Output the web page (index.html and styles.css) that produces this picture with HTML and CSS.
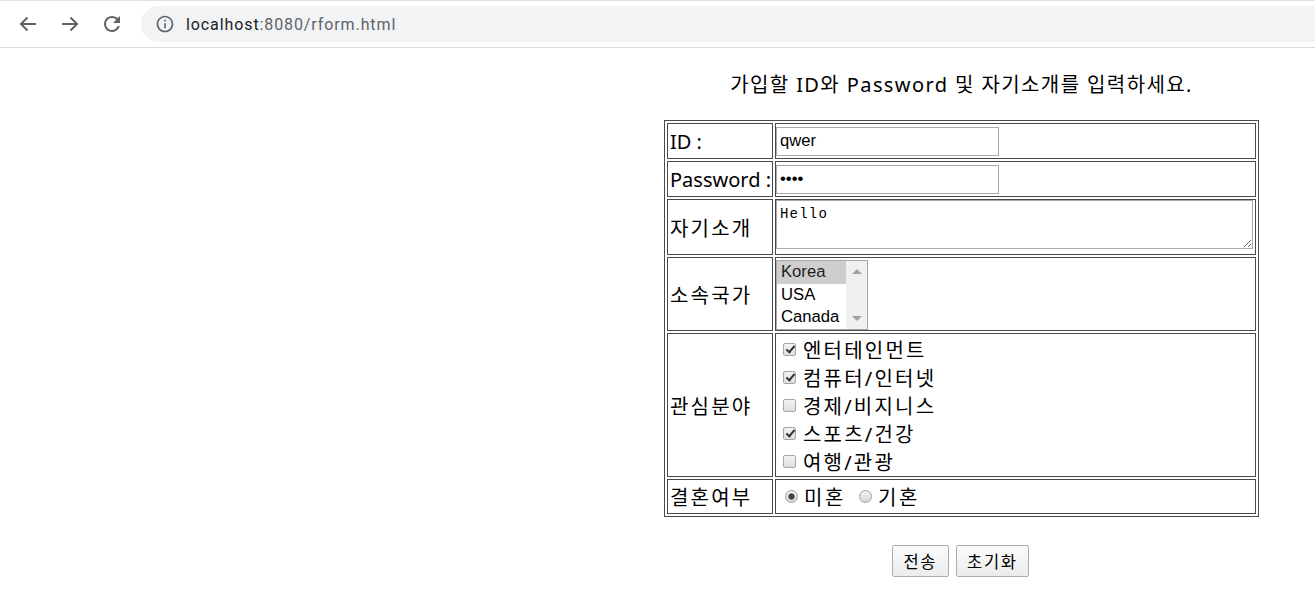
FILE: index.html
```html
<!DOCTYPE html>
<html lang="ko">
<head>
<meta charset="utf-8">
<title>rform</title>
<link rel="stylesheet" href="styles.css">
</head>
<body>
<header class="toolbar">
  <div class="nav-btn">
    <svg width="24" height="24" viewBox="0 0 24 24"><path d="M20 12H5M11.5 5.5L5 12l6.5 6.5" fill="none" stroke="#5f6368" stroke-width="2"/></svg>
  </div>
  <div class="nav-btn">
    <svg width="24" height="24" viewBox="0 0 24 24"><path d="M4 12h15M12.5 5.5L19 12l-6.5 6.5" fill="none" stroke="#5f6368" stroke-width="2"/></svg>
  </div>
  <div class="nav-btn">
    <svg width="24" height="24" viewBox="0 0 24 24"><path d="M17.65 6.35C16.2 4.9 14.21 4 12 4c-4.42 0-7.99 3.58-7.99 8s3.57 8 7.99 8c3.73 0 6.84-2.55 7.73-6h-2.08c-.82 2.33-3.04 4-5.65 4-3.31 0-6-2.69-6-6s2.69-6 6-6c1.66 0 3.14.69 4.22 1.78L13 11h7V4l-2.35 2.35z" fill="#5f6368"/></svg>
  </div>
  <div class="omnibox">
    <svg class="info" width="20" height="20" viewBox="0 0 24 24"><path d="M11 7h2v2h-2zm0 4h2v6h-2zm1-9C6.48 2 2 6.48 2 12s4.48 10 10 10 10-4.48 10-10S17.52 2 12 2zm0 18c-4.41 0-8-3.59-8-8s3.59-8 8-8 8 3.59 8 8-3.59 8-8 8z" fill="#5f6368"/></svg>
    <span class="url"><span class="host">localhost</span><span class="path">:8080/rform.html</span></span>
  </div>
</header>

<div class="page">
  <div class="side"></div>
  <main class="content">
    <p class="title">가입할 ID와 Password 및 자기소개를 입력하세요.</p>
    <form class="join-form">
      <table class="form-table">
        <tr class="row-id">
          <td class="label">ID :</td>
          <td class="value"><input class="text-input" type="text" value="qwer"></td>
        </tr>
        <tr class="row-pw">
          <td class="label">Password :</td>
          <td class="value"><input class="text-input" type="password" value="abcd"></td>
        </tr>
        <tr class="row-intro">
          <td class="label ko">자기소개</td>
          <td class="value top"><textarea class="intro">Hello</textarea></td>
        </tr>
        <tr class="row-country">
          <td class="label ko">소속국가</td>
          <td class="value top">
            <div class="listbox" role="listbox">
              <div class="options">
                <div class="option selected">Korea</div>
                <div class="option">USA</div>
                <div class="option">Canada</div>
              </div>
              <div class="scrollbar"><span class="arrow up"></span><span class="arrow down"></span></div>
            </div>
          </td>
        </tr>
        <tr class="row-interest">
          <td class="label ko">관심분야</td>
          <td class="value ko">
            <label class="choice"><input class="cb" type="checkbox" checked>엔터테인먼트</label>
            <label class="choice"><input class="cb" type="checkbox" checked>컴퓨터/인터넷</label>
            <label class="choice"><input class="cb" type="checkbox">경제/비지니스</label>
            <label class="choice"><input class="cb" type="checkbox" checked>스포츠/건강</label>
            <label class="choice"><input class="cb" type="checkbox">여행/관광</label>
          </td>
        </tr>
        <tr class="row-married">
          <td class="label ko">결혼여부</td>
          <td class="value ko">
            <div class="radios">
              <label class="radio"><input class="rb" type="radio" name="m" checked>미혼</label>
              <label class="radio"><input class="rb" type="radio" name="m">기혼</label>
            </div>
          </td>
        </tr>
      </table>
      <div class="buttons">
        <button class="btn" type="submit">전송</button>
        <button class="btn" type="reset">초기화</button>
      </div>
    </form>
  </main>
</div>
</body>
</html>
```
FILE: styles.css
```css
html, body {
  margin: 0;
  padding: 0;
  background: #fff;
}
body {
  font-family: "Noto Sans", "Noto Sans CJK KR", sans-serif;
  color: #000;
}

/* browser toolbar */
.toolbar {
  box-sizing: border-box;
  height: 48px;
  border-top: 1px solid #dee1e6;
  border-bottom: 1px solid #dadce0;
  display: flex;
  align-items: center;
  padding-left: 7px;
  background: #fff;
}
.nav-btn {
  width: 42px;
  height: 36px;
  display: flex;
  align-items: center;
  justify-content: center;
}
.omnibox {
  margin-left: 8px;
  flex: 1;
  height: 36px;
  border-radius: 18px 0 0 18px;
  background: #f1f3f4;
  display: flex;
  align-items: center;
  padding-left: 14px;
}
.info { flex: none; }
.url {
  margin-left: 11px;
  font-family: Roboto, "Noto Sans", sans-serif;
  font-size: 16px;
  letter-spacing: 0.9px;
}
.host { color: #202124; }
.path { color: #5f6368; }

/* page */
.page {
  display: grid;
  grid-template-columns: 608px 1fr;
}
.content {
  display: flex;
  flex-direction: column;
  align-items: center;
}
.title {
  margin: 22px 0 20px;
  font-size: 20px;
  line-height: 30px;
  letter-spacing: 1.4px;
}
.join-form {
  display: flex;
  flex-direction: column;
  align-items: center;
}

.form-table {
  border: 1px solid #4a4a4a;
  border-spacing: 2px;
  font-size: 20px;
}
.form-table td {
  box-sizing: border-box;
  border: 1px solid #4a4a4a;
  vertical-align: middle;
  padding: 0;
}
.form-table td.label {
  width: 106px;
  padding-left: 2px;
  white-space: nowrap;
}
.form-table td.value {
  width: 481px;
}
.form-table td.top { vertical-align: top; }
.ko { letter-spacing: 2.2px; }

.row-id td, .row-pw td { height: 36px; }
.row-intro td { height: 56px; }
.row-country td { height: 74px; }
.row-interest td { height: 144px; }
.row-married td { height: 35px; }

.text-input {
  box-sizing: border-box;
  display: block;
  width: 223px;
  height: 29px;
  margin: 0;
  border: 1px solid #a9a9a9;
  padding: 0 3px;
  font-family: "Liberation Sans", Arial, sans-serif;
  font-size: 16.67px;
  color: #000;
  background: #fff;
  outline: none;
}

.intro {
  box-sizing: border-box;
  display: block;
  width: 477px;
  height: 49px;
  margin: 0;
  border: 1px solid #a9a9a9;
  padding: 5px 3px 2px;
  font-family: "Liberation Mono", monospace;
  font-size: 14px;
  letter-spacing: 1.2px;
  color: #000;
}

.listbox {
  box-sizing: border-box;
  margin-top: 2px;
  width: 92px;
  height: 70px;
  border: 1px solid #a9a9a9;
  display: flex;
  background: #fff;
}
.options {
  flex: 1;
  font-family: "Liberation Sans", Arial, sans-serif;
  font-size: 16.67px;
}
.option {
  height: 22.67px;
  line-height: 22.67px;
  padding-left: 4px;
  white-space: nowrap;
}
.option.selected {
  background: #cecece;
  color: #1e1e1e;
}
.scrollbar {
  width: 21px;
  background: #f0f0f0;
  display: flex;
  flex-direction: column;
  justify-content: space-between;
  align-items: center;
  padding: 8px 0;
  box-sizing: border-box;
}
.arrow {
  width: 0;
  height: 0;
  border-left: 5px solid transparent;
  border-right: 5px solid transparent;
}
.arrow.up { border-bottom: 5px solid #a3a3a3; }
.arrow.down { border-top: 5px solid #a3a3a3; }

.choice {
  display: flex;
  align-items: center;
  height: 28px;
}
.cb {
  appearance: none;
  -webkit-appearance: none;
  position: relative;
  box-sizing: border-box;
  width: 13px;
  height: 13px;
  margin: 0 7px 0 7px;
  border: 1px solid #a6a6a6;
  border-radius: 2px;
  background: linear-gradient(#f4f4f4, #dedede);
  flex: none;
}
.cb:checked::after {
  content: "";
  position: absolute;
  left: 3.5px;
  top: 0px;
  width: 3px;
  height: 7px;
  border: solid #333;
  border-width: 0 2.4px 2.4px 0;
  transform: rotate(40deg);
}

.radios {
  display: flex;
  align-items: center;
  height: 30px;
}
.radio {
  display: flex;
  align-items: center;
  letter-spacing: 2.6px;
}
.radio + .radio { margin-left: 6px; }
.rb {
  appearance: none;
  -webkit-appearance: none;
  box-sizing: border-box;
  width: 13px;
  height: 13px;
  margin: 0 6px 0 9px;
  border: 1px solid #a0a0a0;
  border-radius: 50%;
  background: linear-gradient(#f2f2f2, #d6d6d6);
  flex: none;
}
.radio + .radio .rb { margin-left: 7px; }
.rb:checked {
  background: radial-gradient(circle, #444 0 2.8px, transparent 3.4px), linear-gradient(#f2f2f2, #d6d6d6);
}

.buttons {
  display: flex;
  gap: 7px;
  margin-top: 28px;
  margin-right: 2px;
}
.btn {
  box-sizing: border-box;
  height: 32px;
  padding: 0 10.5px;
  border: 1px solid #adadad;
  border-radius: 2px;
  background: linear-gradient(#fbfbfb, #ececec);
  font-family: "Noto Sans CJK KR", sans-serif;
  font-size: 16.5px;
  letter-spacing: 1.6px;
  color: #000;
  line-height: 30px;
}
```
